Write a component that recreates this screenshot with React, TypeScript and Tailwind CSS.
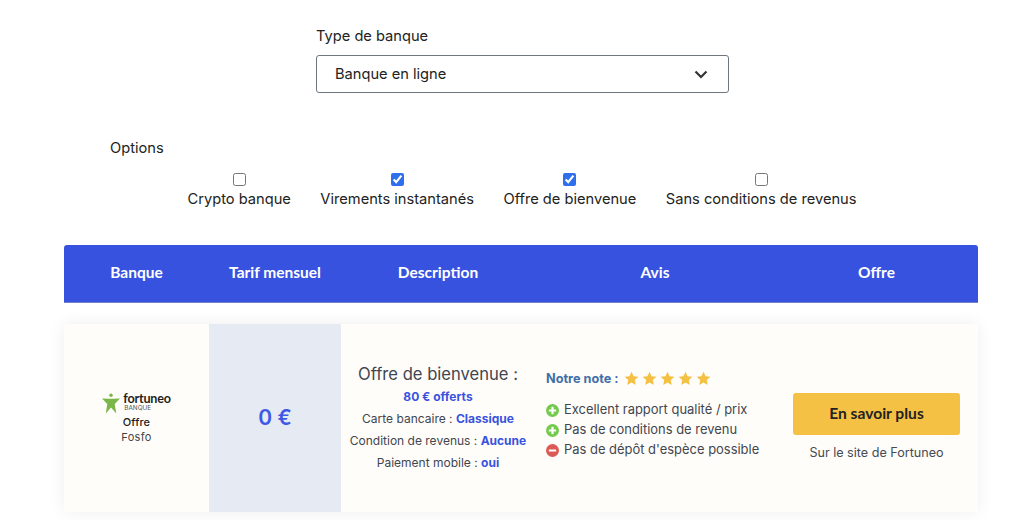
import React from "react";

const inter = "font-['Inter','Liberation_Sans',sans-serif]";
const head = "font-['Lato','Liberation_Sans',sans-serif]";

function Star() {
  return (
    <svg width="15" height="15" viewBox="0 0 24 24" className="block">
      <path fill="#f4c145" d="M12 1.2l3.3 7.1 7.7.9-5.7 5.3 1.5 7.7L12 18.4l-6.8 3.8 1.5-7.7L1 9.2l7.7-.9z" />
    </svg>
  );
}

function Mark({ plus }: { plus: boolean }) {
  return (
    <svg width="13" height="13" viewBox="0 0 13 13" className="block shrink-0">
      <circle cx="6.5" cy="6.5" r="6.5" fill={plus ? "#74c94f" : "#db5a55"} />
      <rect x="2.8" y="5.4" width="7.4" height="2.2" rx="0.6" fill="#fff" />
      {plus && <rect x="5.4" y="2.8" width="2.2" height="7.4" rx="0.6" fill="#fff" />}
    </svg>
  );
}

function Check({ label, checked }: { label: string; checked?: boolean }) {
  return (
    <label className="flex flex-col items-center gap-[4px]">
      <input type="checkbox" readOnly checked={!!checked} className="m-0 w-[13px] h-[13px] accent-[#2f6fed]" />
      <span className="text-[14.65px] leading-[18px] text-[#222]">{label}</span>
    </label>
  );
}

function Line({ label, value }: { label: string; value: string }) {
  return (
    <p className="text-[12px] leading-[15px] text-[#3f4650] whitespace-nowrap">
      {label} : <span className="font-bold text-[#3852e0]">{value}</span>
    </p>
  );
}

function Pro({ plus, text }: { plus: boolean; text: string }) {
  return (
    <li className="flex items-center gap-[5px] h-[20px]">
      <Mark plus={plus} />
      <span className="text-[12.95px] text-[#3f4650] whitespace-nowrap">{text}</span>
    </li>
  );
}

export default function App() {
  return (
    <div className={`${inter} w-[1024px] h-[520px] overflow-hidden bg-white`}>
      <div className="ml-[316px] w-[413px] pt-[27px]">
        <div className="text-[14.65px] leading-[18px] text-[#222]">Type de banque</div>
        <div className="mt-[10px] h-[38px] border border-[#6f7680] rounded-[3px] flex items-center justify-between pl-[18px] pr-[20px] pt-[1px]">
          <span className="text-[14.65px] text-[#222]">Banque en ligne</span>
          <svg width="14" height="9" viewBox="0 0 14 9" className="block -mt-[1px]">
            <path d="M1.5 1.5L7 7l5.5-5.5" fill="none" stroke="#333" strokeWidth="2.2" />
          </svg>
        </div>
      </div>

      <div className="ml-[110px] mt-[46px] text-[14.65px] leading-[18px] text-[#222]">Options</div>

      <div className="mt-[16px] flex justify-center gap-[29.5px] pl-[20px]">
        <Check label="Crypto banque" />
        <Check label="Virements instantanés" checked />
        <Check label="Offre de bienvenue" checked />
        <Check label="Sans conditions de revenus" />
      </div>

      <div className="ml-[64px] w-[914px] mt-[37px]">
        <div className={`${head} h-[58px] pb-[2px] bg-[#3852e0] rounded-t-[3px] border-b border-[#7480c8] grid grid-cols-[145px_132px_194px_240px_203px] items-center text-center text-white font-bold text-[15.5px]`}>
          <div>Banque</div>
          <div>Tarif mensuel</div>
          <div>Description</div>
          <div>Avis</div>
          <div>Offre</div>
        </div>

        <div className="mt-[21px] h-[188px] bg-[#fffdf9] shadow-[0_0_16px_rgba(0,0,0,0.07)] grid grid-cols-[145px_132px_194px_240px_203px]">
          <div className="flex flex-col items-center justify-center pt-[2px] text-center">
            <div className="flex items-start gap-[3px] h-[21px]">
              <svg width="18" height="21" viewBox="0 0 18 21" className="block">
                <circle cx="9" cy="2.2" r="1.7" fill="#7ab648" />
                <path fill="#7ab648" d="M0 5.5l7 .3h4l7-.3-5.3 5.5 1.6 9.5L9 14.5 3.8 20.5l1.5-9.5z" />
              </svg>
              <div className="flex flex-col items-start -mt-[1px]">
                <span className={`${head} font-bold text-[12.6px] leading-[13px] tracking-[-0.2px] text-[#1f1f1f]`}>fortuneo</span>
                <span className="text-[6.4px] leading-[7px] text-[#555] ml-[1px]">BANQUE</span>
              </div>
            </div>
            <div className="text-[11px] leading-[15px] font-medium text-[#222] mt-[1px] tracking-[0.1px]">Offre</div>
            <div className="text-[11px] leading-[15px] text-[#444] tracking-[0.3px]">Fosfo</div>
          </div>

          <div className="bg-[#e6eaf2] flex items-center justify-center">
            <span className="text-[21px] font-semibold text-[#3f59e4]">0 €</span>
          </div>

          <div className="flex flex-col items-center justify-center gap-[7px] pb-[3px] text-center">
            <div className="text-[16.6px] leading-[20px] text-[#3f4650] whitespace-nowrap">Offre de bienvenue :</div>
            <div className="text-[12px] leading-[15px] font-bold text-[#3852e0] -mt-[2px]">80 € offerts</div>
            <Line label="Carte bancaire" value="Classique" />
            <Line label="Condition de revenus" value="Aucune" />
            <Line label="Paiement mobile" value="oui" />
          </div>

          <div className="pl-[11px] flex flex-col justify-center pb-[7px]">
            <div className="flex items-center gap-[5px]">
              <span className="text-[12.7px] font-bold text-[#3f6fa8] whitespace-nowrap">Notre note :</span>
              <div className="flex gap-[3px]">
                <Star />
                <Star />
                <Star />
                <Star />
                <Star />
              </div>
            </div>
            <ul className="mt-[12px]">
              <Pro plus text="Excellent rapport qualité / prix" />
              <Pro plus text="Pas de conditions de revenu" />
              <Pro plus={false} text="Pas de dépôt d'espèce possible" />
            </ul>
          </div>

          <div className="flex flex-col items-center justify-center pt-[18px]">
            <div className={`${head} w-[167px] h-[42px] bg-[#f4c145] rounded-[3px] flex items-center justify-center font-bold text-[15.6px] text-[#222]`}>
              En savoir plus
            </div>
            <div className="mt-[10px] text-[12.6px] leading-[16px] text-[#444b55]">Sur le site de Fortuneo</div>
          </div>
        </div>
      </div>
    </div>
  );
}
